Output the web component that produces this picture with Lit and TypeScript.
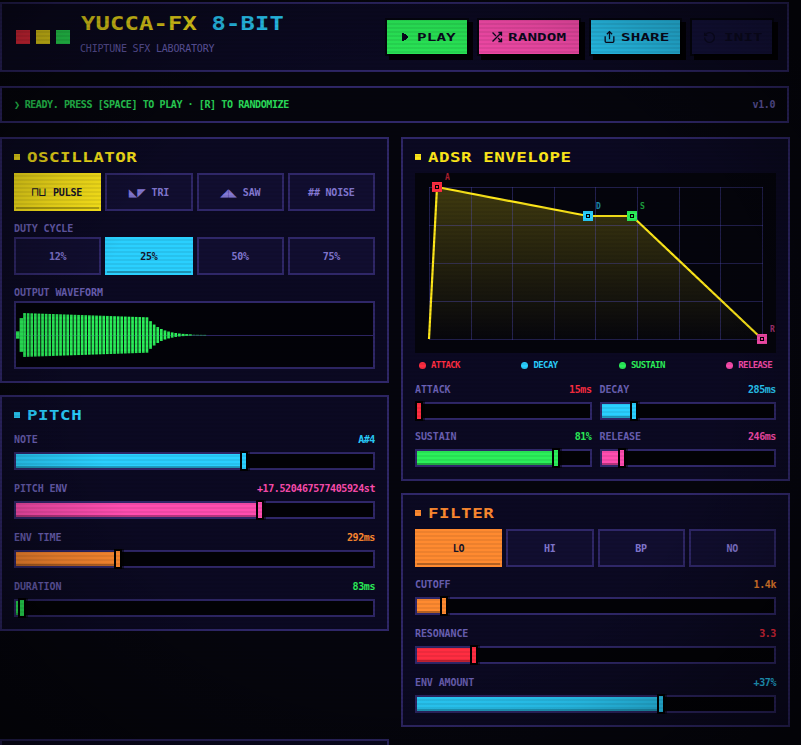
import { LitElement, html, css, svg } from "lit";
import { customElement } from "lit/decorators.js";

type Slider = { label: string; value: string; pct: number; color: string };

const PITCH: Slider[] = [
  { label: "NOTE", value: "A#4", pct: 63.3, color: "cyan" },
  { label: "PITCH ENV", value: "+17.520467577405924st", pct: 67.8, color: "pink" },
  { label: "ENV TIME", value: "292ms", pct: 28, color: "orange" },
  { label: "DURATION", value: "83ms", pct: 1.1, color: "green" },
];
const ADSR: Slider[] = [
  { label: "ATTACK", value: "15ms", pct: 0, color: "red" },
  { label: "DECAY", value: "285ms", pct: 17.4, color: "cyan" },
  { label: "SUSTAIN", value: "81%", pct: 79.4, color: "green" },
  { label: "RELEASE", value: "246ms", pct: 11, color: "pink" },
];
const FILTER: Slider[] = [
  { label: "CUTOFF", value: "1.4k", pct: 7, color: "orange" },
  { label: "RESONANCE", value: "3.3", pct: 15.4, color: "red" },
  { label: "ENV AMOUNT", value: "+37%", pct: 67.8, color: "cyan" },
];
const POINTS = [
  { x: 437, y: 187, l: "A", c: "#ff2d41" },
  { x: 588, y: 216, l: "D", c: "#2ad0ff" },
  { x: 632, y: 216, l: "S", c: "#2bf05a" },
  { x: 762, y: 339, l: "R", c: "#ff4db0" },
];

function waveBars() {
  const out = [];
  for (let x = 16; x < 204; x += 3.6) {
    let h: number;
    if (x < 21) h = 22 * ((x - 15) / 6);
    else if (x < 146) h = 22 - (4.3 * (x - 21)) / 125;
    else h = 17.7 * Math.exp(-(x - 146) / 13);
    const w = x < 21 ? 3.6 : x > 180 ? 3 : 2.7;
    const o = x > 190 ? 0.45 : 1;
    out.push(
      svg`<rect x=${x} y=${335 - h} width=${w} height=${Math.max(h * 2, 1)} fill="#2bf05a" opacity=${o}></rect>`
    );
  }
  return out;
}

@customElement("app-root")
export class AppRoot extends LitElement {
  static styles = css`
    :host {
      display: block;
      position: relative;
      width: 801px;
      height: 745px;
      overflow: hidden;
      background: #05050d;
      font-family: "DejaVu Sans Mono", "Liberation Mono", monospace;
      font-size: 10px;
      color: #8479d4;
      --line: #2f2768;
      --red: #ff2d41;
      --cyan: #2ad0ff;
      --green: #2bf05a;
      --yellow: #ffe81a;
      --pink: #ff4db0;
      --orange: #ff8a30;
    }
    .c-red { --c: var(--red); }
    .c-cyan { --c: var(--cyan); }
    .c-green { --c: var(--green); }
    .c-yellow { --c: var(--yellow); }
    .c-pink { --c: var(--pink); }
    .c-orange { --c: var(--orange); }

    .page {
      width: 789px;
      padding-top: 2px;
      display: flex;
      flex-direction: column;
    }
    .wide {
      display: inline-block;
      font-weight: 700;
      white-space: nowrap;
      transform-origin: left center;
      transform: scaleX(1.25);
    }

    header {
      height: 70px;
      box-sizing: border-box;
      border: 2px solid var(--line);
      background: #0b0922;
      display: flex;
      align-items: center;
      padding: 0 15px 0 14px;
    }
    .swatches { display: flex; gap: 6px; margin-right: 10px; }
    .swatches i { display: block; width: 14px; height: 14px; background: var(--c); }
    .brand { flex: 1; display: flex; flex-direction: column; }
    .logo {
      font-size: 19px;
      line-height: 18px;
      letter-spacing: 0.16px;
      color: var(--yellow);
      margin: -7px 0 0 1px;
    }
    .logo b { color: var(--cyan); font-weight: 700; }
    .sub {
      margin-top: 11px;
      margin-bottom: -2px;
      line-height: 12px;
      letter-spacing: -0.18px;
      color: #6a60b4;
    }
    .actions { display: flex; gap: 12px; }
    .act {
      height: 34px;
      box-sizing: border-box;
      display: flex;
      align-items: center;
      background: var(--c);
      color: #0a0a1f;
      box-shadow: 0 0 0 2px rgba(0, 0, 0, 0.55), 4px 4px 0 2px rgba(0, 0, 0, 0.9);
    }
    .act svg { display: block; flex: none; }
    .act .wide {
      font-size: 11px;
      letter-spacing: 0.06px;
      transform: scaleX(1.45);
    }
    .play { width: 80px; padding-left: 15px; }
    .play .wide { margin-left: 9px; }
    .random { width: 100px; padding-left: 12px; }
    .random .wide { margin-left: 5px; }
    .share { width: 89px; padding-left: 12px; }
    .share .wide { margin-left: 5px; }
    .init { width: 80px; padding-left: 11px; background: #151340; color: #0c0a24; }
    .init .wide { margin-left: 8px; }

    .status {
      margin-top: 14px;
      height: 37px;
      box-sizing: border-box;
      border: 2px solid var(--line);
      background: #05050d;
      display: flex;
      align-items: center;
      justify-content: space-between;
      padding: 0 12px;
      letter-spacing: -0.4px;
      font-weight: 700;
      color: #2be05c;
    }
    .status .msg { display: flex; gap: 5px; }
    .status .ver { color: #6a60b4; }

    .grid {
      margin-top: 14px;
      display: grid;
      grid-template-columns: 1fr 1fr;
      gap: 12px;
    }
    .col { display: flex; flex-direction: column; gap: 12px; }
    .panel {
      box-sizing: border-box;
      border: 2px solid var(--line);
      background: #0b0922;
      padding: 12px;
    }
    .panel.rest { height: 120px; }
    .ptitle {
      height: 12px;
      margin-bottom: 10px;
      display: flex;
      align-items: center;
      gap: 7px;
      color: var(--c);
    }
    .ptitle i { display: block; width: 6px; height: 6px; background: var(--c); }
    .ptitle .wide {
      font-size: 14px;
      line-height: 12px;
      letter-spacing: 0.4px;
    }

    .seg { display: grid; grid-template-columns: repeat(4, 1fr); gap: 4px; }
    .seg.filter { margin-bottom: 9px; }
    .seg div {
      height: 38px;
      box-sizing: border-box;
      border: 2px solid var(--line);
      background: #110e30;
      display: flex;
      align-items: center;
      justify-content: center;
      gap: 6px;
      font-weight: 700;
      letter-spacing: -0.2px;
      white-space: nowrap;
    }
    .seg div.on {
      background: var(--c);
      border-color: var(--c);
      color: #16142a;
      box-shadow: inset 0 -2px 0 rgba(0, 0, 0, 0.25);
    }
    .seg .ic { font-size: 14px; line-height: 14px; letter-spacing: 0; font-weight: 400; }
    .seg .ic.sq { font-size: 12px; letter-spacing: 0.2px; margin-left: -2px; margin-right: 1px; }

    .cap {
      margin: 12px 0 2px;
      line-height: 12px;
      letter-spacing: -0.1px;
      color: #6a60b4;
      font-weight: 700;
    }
    .wave {
      height: 68px;
      box-sizing: border-box;
      border: 2px solid var(--line);
      background: #020208;
    }
    .wave svg, .graph svg { display: block; }

    .graph { height: 180px; background: #04040c; }
    .legend {
      margin: 6px 0 10px;
      padding: 0 4px;
      height: 12px;
      display: flex;
      justify-content: space-between;
      align-items: center;
      font-size: 9px;
      letter-spacing: -0.6px;
      font-weight: 700;
    }
    .legend span { display: flex; align-items: center; gap: 5px; color: var(--c); }
    .legend i { display: block; width: 7px; height: 7px; border-radius: 50%; background: var(--c); }

    .sliders { display: flex; flex-direction: column; gap: 10px; }
    .sliders.two { display: grid; grid-template-columns: 1fr 1fr; gap: 8px; }
    .row {
      display: flex;
      justify-content: space-between;
      padding: 3px 0 6px;
      line-height: 12px;
      font-weight: 700;
    }
    .row .k { color: #6a60b4; letter-spacing: -0.1px; }
    .row .v { color: var(--c); letter-spacing: -0.4px; }
    .track {
      height: 18px;
      box-sizing: border-box;
      border: 2px solid var(--line);
      background: #020206;
    }
    .inner { position: relative; height: 100%; }
    .fill {
      height: 100%;
      background: var(--c);
      box-shadow: inset 0 -2px 0 rgba(0, 0, 0, 0.25);
    }
    .thumb {
      position: absolute;
      top: -3px;
      bottom: -3px;
      width: 4px;
      margin-left: -2px;
      background: var(--c);
      border: 2px solid #000;
      box-shadow: 2px 0 0 rgba(0, 0, 0, 0.5);
    }

    .scan {
      position: absolute;
      inset: 0;
      pointer-events: none;
      background:
        repeating-linear-gradient(0deg, rgba(0, 0, 0, 0.07) 0 2px, transparent 2px 4px),
        radial-gradient(ellipse farthest-corner at center, transparent 55%, rgba(0, 0, 0, 0.14) 70%, rgba(0, 0, 0, 0.25) 78%, rgba(0, 0, 0, 0.38) 92%, rgba(0, 0, 0, 0.5) 100%);
    }
  `;

  private slider(s: Slider) {
    return html`<div class="c-${s.color}">
      <div class="row"><span class="k">${s.label}</span><span class="v">${s.value}</span></div>
      <div class="track">
        <div class="inner">
          <div class="fill" style="width:${s.pct}%"></div>
          <div class="thumb" style="left:${s.pct}%"></div>
        </div>
      </div>
    </div>`;
  }

  private title(text: string, color: string) {
    return html`<div class="ptitle c-${color}"><i></i><span class="wide">${text}</span></div>`;
  }

  private graph() {
    const xs = Array.from({ length: 9 }, (_, i) => 429.5 + 41.6 * i);
    const ys = Array.from({ length: 5 }, (_, i) => 187.5 + 38 * i);
    return html`<svg width="361" height="180" viewBox="415 173 361 180">
      <defs>
        <linearGradient id="env" x1="0" y1="0" x2="0" y2="1">
          <stop offset="0" stop-color="#ffe81a" stop-opacity="0.24"></stop>
          <stop offset="1" stop-color="#ffe81a" stop-opacity="0.01"></stop>
        </linearGradient>
      </defs>
      <polygon points="429,339 437,187 588,216 632,216 762,339" fill="url(#env)"></polygon>
      ${xs.map(
        (x) => svg`<line x1=${x} x2=${x} y1="187" y2="339.5" stroke="#5a54c8" stroke-opacity="0.36" shape-rendering="crispEdges"></line>`
      )}
      ${ys.map(
        (y) => svg`<line x1="429" x2="763" y1=${y} y2=${y} stroke="#5a54c8" stroke-opacity="0.36" shape-rendering="crispEdges"></line>`
      )}
      <polyline points="429,339 437,187 588,216 632,216 762,339" fill="none" stroke="#ffe81a" stroke-width="2.2"></polyline>
      ${POINTS.map(
        (p) => svg`
          <rect x=${p.x - 5} y=${p.y - 5} width="10" height="10" fill=${p.c}></rect>
          <rect x=${p.x - 2} y=${p.y - 2} width="4" height="4" fill="#000"></rect>
          <rect x=${p.x - 1} y=${p.y - 1} width="2" height="2" fill=${p.c}></rect>
          <text x=${p.x + 8} y=${p.y - 7} font-size="8" font-weight="700" fill=${p.c} opacity="0.65">${p.l}</text>`
      )}
    </svg>`;
  }

  render() {
    return html`<div class="page">
        <header>
          <div class="swatches">
            <i class="c-red"></i><i class="c-yellow"></i><i class="c-green"></i>
          </div>
          <div class="brand">
            <span class="wide logo">YUCCA-FX <b>8-BIT</b></span>
            <span class="sub">CHIPTUNE SFX LABORATORY</span>
          </div>
          <div class="actions">
            <div class="act play c-green">
              <svg width="6" height="8" viewBox="0 0 6 8"><path d="M0 0h2v1h2v1h1v1h1v2h-1v1h-1v1h-2v1h-2z" fill="currentColor"></path></svg>
              <span class="wide">PLAY</span>
            </div>
            <div class="act random c-pink">
              <svg width="12" height="12" viewBox="0 0 24 24" fill="none" stroke="currentColor" stroke-width="2.6" stroke-linecap="square"><path d="M16 3h5v5M4 20 21 3M21 16v5h-5M15 15l6 6M4 4l5 5"></path></svg>
              <span class="wide">RANDOM</span>
            </div>
            <div class="act share c-cyan">
              <svg width="13" height="14" viewBox="0 0 24 24" fill="none" stroke="currentColor" stroke-width="2.4" stroke-linecap="square"><path d="M4 12v8a2 2 0 0 0 2 2h12a2 2 0 0 0 2-2v-8M16 6l-4-4-4 4M12 2v13"></path></svg>
              <span class="wide">SHARE</span>
            </div>
            <div class="act init">
              <svg width="13" height="13" viewBox="0 0 24 24" fill="none" stroke="currentColor" stroke-width="2.4"><path d="M3 12a9 9 0 1 0 9-9 9.75 9.75 0 0 0-6.74 2.74L3 8M3 3v5h5"></path></svg>
              <span class="wide">INIT</span>
            </div>
          </div>
        </header>

        <div class="status">
          <span class="msg"><span>❯</span><span>READY. PRESS [SPACE] TO PLAY · [R] TO RANDOMIZE</span></span>
          <span class="ver">v1.0</span>
        </div>

        <div class="grid">
          <div class="col">
            <section class="panel">
              ${this.title("OSCILLATOR", "yellow")}
              <div class="seg">
                <div class="on c-yellow"><span class="ic sq">⊓⊔</span>PULSE</div>
                <div><span class="ic">◣◤</span>TRI</div>
                <div><span class="ic">◢◣</span>SAW</div>
                <div>## NOISE</div>
              </div>
              <div class="cap">DUTY CYCLE</div>
              <div class="seg">
                <div>12%</div>
                <div class="on c-cyan">25%</div>
                <div>50%</div>
                <div>75%</div>
              </div>
              <div class="cap">OUTPUT WAVEFORM</div>
              <div class="wave">
                <svg width="357" height="64" viewBox="16 303 357 64">
                  <line x1="16" x2="373" y1="335.5" y2="335.5" stroke="#2f2768"></line>
                  ${waveBars()}
                </svg>
              </div>
            </section>
            <section class="panel">
              ${this.title("PITCH", "cyan")}
              <div class="sliders">${PITCH.map((s) => this.slider(s))}</div>
            </section>
          </div>
          <div class="col">
            <section class="panel">
              ${this.title("ADSR ENVELOPE", "yellow")}
              <div class="graph">${this.graph()}</div>
              <div class="legend">
                <span class="c-red"><i></i>ATTACK</span>
                <span class="c-cyan"><i></i>DECAY</span>
                <span class="c-green"><i></i>SUSTAIN</span>
                <span class="c-pink"><i></i>RELEASE</span>
              </div>
              <div class="sliders two">${ADSR.map((s) => this.slider(s))}</div>
            </section>
            <section class="panel">
              ${this.title("FILTER", "orange")}
              <div class="seg filter">
                <div class="on c-orange">LO</div>
                <div>HI</div>
                <div>BP</div>
                <div>NO</div>
              </div>
              <div class="sliders">${FILTER.map((s) => this.slider(s))}</div>
            </section>
          </div>
          <section class="panel rest"></section>
        </div>
      </div>
      <div class="scan"></div>`;
  }
}
